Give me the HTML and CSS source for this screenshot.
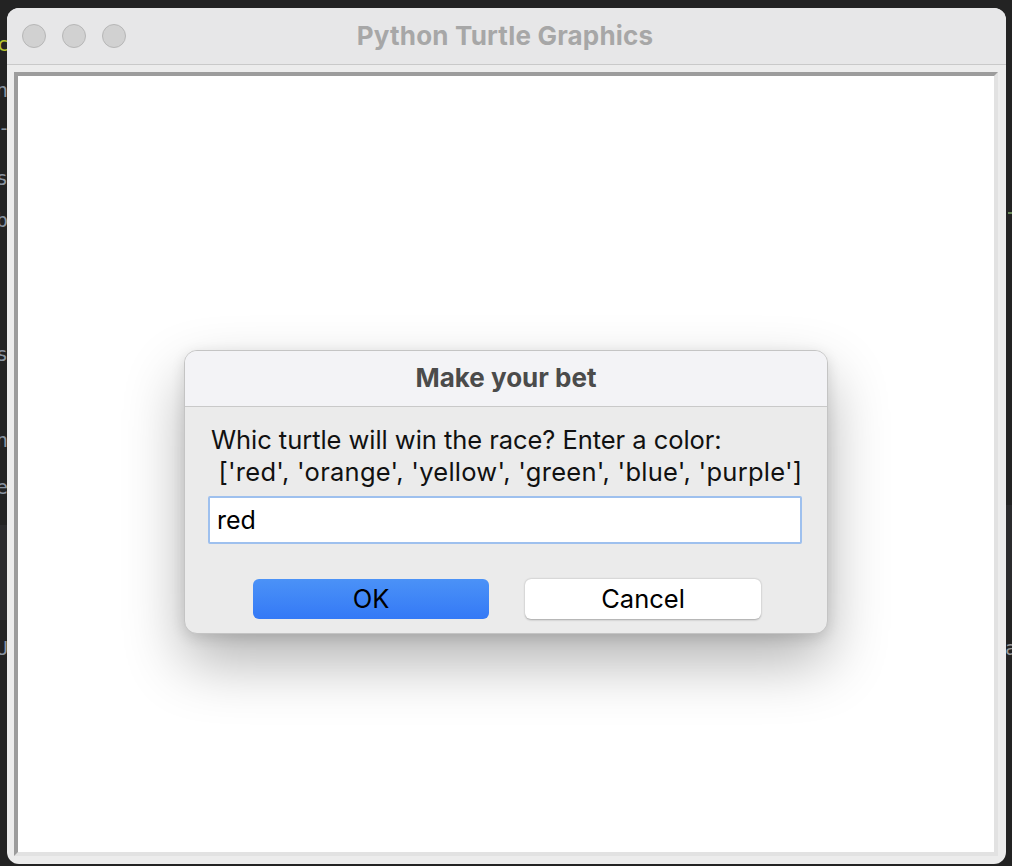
FILE: index.html
```html
<!DOCTYPE html>
<html>
<head>
<meta charset="utf-8">
<link rel="stylesheet" href="styles.css">
</head>
<body>
<div class="desktop">
  <div class="bgfrag">
    <span class="frag f-c">c</span>
    <span class="frag f-n1">n</span>
    <span class="frag f-dash">-</span>
    <span class="frag f-s1">s</span>
    <span class="frag f-b">b</span>
    <span class="frag f-s2">s</span>
    <span class="frag f-n2">n</span>
    <span class="frag f-e">e</span>
    <span class="frag f-u">U</span>
    <span class="frag f-a">a</span>
    <span class="band band-l"></span>
    <span class="band band-r"></span>
    <span class="gdash"></span>
  </div>
  <div class="window">
    <div class="titlebar">
      <div class="lights">
        <span class="light"></span>
        <span class="light"></span>
        <span class="light"></span>
      </div>
      <div class="wtitle">Python Turtle Graphics</div>
    </div>
    <div class="content">
      <div class="canvas"></div>
    </div>
  </div>
  <div class="dialog">
    <div class="dhead">Make your bet</div>
    <div class="dbody">
      <div class="prompt"><span class="pl1">Whic turtle will win the race? Enter a color:</span><br><span class="pl2">&nbsp;['red', 'orange', 'yellow', 'green', 'blue', 'purple']</span></div>
      <div class="entry">red</div>
      <div class="buttons">
        <div class="btn btn-ok">OK</div>
        <div class="btn btn-cancel">Cancel</div>
      </div>
    </div>
  </div>
</div>
</body>
</html>
```

FILE: styles.css
```css
html, body {
  margin: 0;
  padding: 0;
  background: #232323;
  font-family: Inter, "Liberation Sans", Arial, sans-serif;
}
.desktop {
  position: relative;
  width: 1012px;
  height: 866px;
  overflow: hidden;
  background: #232323;
}
.bgfrag .frag {
  position: absolute;
  font-family: "DejaVu Sans Mono", monospace;
  font-size: 20px;
  color: #8a94a0;
  line-height: 24px;
}
.f-c { left: -3px; top: 32px; color: #b5c42e !important; }
.f-n1 { left: -4px; top: 78px; }
.f-dash { left: -2px; top: 116px; }
.f-s1 { left: -4px; top: 166px; }
.f-b { left: -4px; top: 208px; }
.f-s2 { left: -4px; top: 342px; }
.f-n2 { left: -4px; top: 428px; }
.f-e { left: -4px; top: 475px; }
.f-u { left: -4px; top: 636px; }
.f-a { left: 1005px; top: 636px; color: #9a9a9a !important; }
.band {
  position: absolute;
  background: #2b2b2d;
}
.band-l { left: 0; top: 525px; width: 7px; height: 95px; }
.band-r { left: 1005px; top: 505px; width: 7px; height: 95px; }
.gdash {
  position: absolute;
  left: 1008px;
  top: 212px;
  width: 4px;
  height: 2px;
  background: #6b8a5a;
}
.window {
  position: absolute;
  left: 7px;
  top: 8px;
  width: 999px;
  height: 856px;
  background: #ececec;
  border-radius: 12px;
  overflow: hidden;
  display: flex;
  flex-direction: column;
}
.titlebar {
  height: 56px;
  background: #e7e7e8;
  border-bottom: 1px solid #c9c9c9;
  position: relative;
  display: flex;
  align-items: center;
  justify-content: center;
  flex: none;
}
.lights {
  position: absolute;
  left: 15px;
  top: 16px;
  display: flex;
  gap: 16px;
}
.light {
  width: 22px;
  height: 22px;
  border-radius: 50%;
  background: #d1d1d1;
  border: 1px solid #b7b7b7;
}
.wtitle {
  font-weight: 700;
  font-size: 26px;
  color: #a7a7a7;
  margin-top: -1px;
  margin-left: -3px;
  letter-spacing: 0.2px;
}
.content {
  flex: 1;
  padding: 7px 8px 8px 7px;
}
.canvas {
  width: 976px;
  height: 776px;
  background: #ffffff;
  border-top: 4px solid #9c9c9c;
  border-left: 4px solid #9c9c9c;
  border-right: 4px solid #e2e2e2;
  border-bottom: 4px solid #e2e2e2;
}
.dialog {
  position: absolute;
  left: 184px;
  top: 350px;
  width: 642px;
  height: 282px;
  border: 1px solid #c4c4c4;
  border-radius: 13px;
  background: #ebebeb;
  overflow: hidden;
  box-shadow: 0 28px 60px rgba(0, 0, 0, 0.30), 0 4px 14px rgba(0, 0, 0, 0.12);
  display: flex;
  flex-direction: column;
}
.dhead {
  height: 56px;
  background: #f3f3f6;
  border-bottom: 1px solid #c9c9c9;
  display: flex;
  align-items: center;
  justify-content: center;
  font-weight: 700;
  font-size: 26px;
  color: #4b4b4b;
  flex: none;
  padding-bottom: 3px;
  box-sizing: border-box;
}
.dbody {
  padding: 17px 23px 0 23px;
}
.prompt {
  font-size: 25.5px;
  line-height: 32px;
  color: #111;
  padding-left: 3px;
  white-space: nowrap;
}
.pl1 {
  letter-spacing: -0.05px;
}
.pl2 {
  letter-spacing: 0.25px;
}
.entry {
  margin-top: 8px;
  height: 44px;
  border: 2px solid #9ec0ee;
  border-radius: 2px;
  background: #fff;
  font-size: 25px;
  line-height: 44px;
  padding-left: 7px;
  color: #000;
  width: 583px;
}
.buttons {
  margin-top: 35px;
  display: flex;
  gap: 36px;
  padding-left: 45px;
}
.btn {
  width: 236px;
  height: 40px;
  border-radius: 6px;
  font-size: 25.5px;
  line-height: 40px;
  text-align: center;
  color: #000;
}
.btn-ok {
  background: linear-gradient(#4b92f7, #3479f6);
}
.btn-cancel {
  background: #fff;
  box-shadow: 0 0.5px 2px rgba(0, 0, 0, 0.3);
}
```
